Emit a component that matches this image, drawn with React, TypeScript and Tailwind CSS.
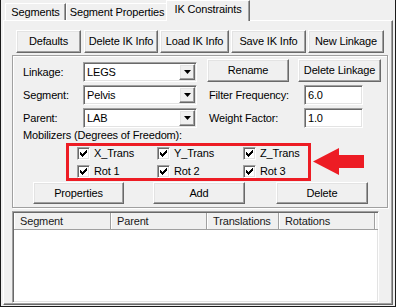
import React from 'react';

const raised =
  'border border-t-white border-l-white border-r-[#696969] border-b-[#696969] shadow-[inset_-1px_-1px_#a0a0a0,inset_1px_1px_#e3e3e3]';
const sunken =
  'border border-t-[#a0a0a0] border-l-[#a0a0a0] border-r-white border-b-white shadow-[inset_1px_1px_#696969,inset_-1px_-1px_#e3e3e3]';

function Btn({ label, className = '' }: { label: string; className?: string }) {
  return (
    <div className={`${raised} bg-[#f0f0f0] flex items-center justify-center shrink-0 ${className}`}>
      {label}
    </div>
  );
}

function Combo({ value }: { value: string }) {
  return (
    <div className={`${sunken} w-[114px] h-[20px] bg-white flex items-center pl-[3px] pr-[1px] shrink-0`}>
      <span className="flex-1">{value}</span>
      <div className={`${raised} w-[16px] h-[16px] bg-[#f0f0f0] flex items-center justify-center`}>
        <svg width="7" height="4" viewBox="0 0 7 4">
          <path d="M0 0h7L3.5 4z" fill="#000" />
        </svg>
      </div>
    </div>
  );
}

const CHECK = [2, 3, 4, 3, 2, 1, 0];

function Check({ label, className = '' }: { label: string; className?: string }) {
  return (
    <div className={`flex items-center h-[13px] ${className}`}>
      <div className={`${sunken} w-[13px] h-[13px] bg-white flex items-center justify-center shrink-0`}>
        <svg width="7" height="7" viewBox="0 0 7 7" shapeRendering="crispEdges">
          {CHECK.map((y, x) => (
            <rect key={x} x={x} y={y} width="1" height="3" fill="#000" />
          ))}
        </svg>
      </div>
      <span className="ml-[4px]">{label}</span>
    </div>
  );
}

function Tab({ label, className = '' }: { label: string; className?: string }) {
  return (
    <div
      className={`border-t border-l border-r border-t-white border-l-white border-r-[#696969] shadow-[inset_-1px_0_#a0a0a0] bg-[#f0f0f0] flex items-center justify-center shrink-0 ${className}`}
    >
      {label}
    </div>
  );
}

const COLS = [
  { name: 'Segment', w: 'w-[97px]' },
  { name: 'Parent', w: 'w-[96px]' },
  { name: 'Translations', w: 'w-[72px]' },
  { name: 'Rotations', w: 'w-[96px]' },
];

export default function App() {
  return (
    <div className="w-[396px] h-[307px] bg-[#f0f0f0] border-l border-r border-b border-[#1a1a1a] flex flex-col font-['Liberation_Sans',Arial,sans-serif] text-[11px] tracking-[-0.15px] text-black leading-[13px] overflow-hidden">
      {/* tabs */}
      <div className="flex items-end h-[20px] pl-[4px] shrink-0">
        <Tab label="Segments" className="w-[61px] h-[17px]" />
        <Tab label="Segment Properties" className="w-[102px] h-[17px]" />
        <Tab label="IK Constraints" className="relative z-10 w-[84px] h-[21px] -ml-[2px] -mb-px pb-[3px]" />
      </div>

      <div className="mx-[2px] mb-[1px] flex-1 border border-t-white border-l-white border-r-[#696969] border-b-[#696969] shadow-[inset_-1px_-1px_#a0a0a0] flex flex-col">
        {/* top buttons */}
        <div className="flex mt-[9px] ml-[12px] h-[23px]">
          <Btn label="Defaults" className="w-[65px] h-[23px]" />
          <Btn label="Delete IK Info" className="w-[74px] h-[23px] ml-[3px]" />
          <Btn label="Load IK Info" className="w-[69px] h-[23px] ml-[2px]" />
          <Btn label="Save IK Info" className="w-[75px] h-[23px] ml-[2px]" />
          <Btn label="New Linkage" className="w-[76px] h-[23px] ml-[2px]" />
        </div>

        {/* group box */}
        <div className="relative mt-[2px] ml-[8px] w-[376px] h-[153px] shrink-0 border border-[#a0a0a0] shadow-[inset_1px_1px_white,1px_1px_white] pt-[3px] flex flex-col">
          <div className="flex items-start h-[23px]">
            <div className="flex items-center mt-[3px] h-[20px]">
              <span className="w-[60px] pl-[10px] box-content">Linkage:</span>
              <Combo value="LEGS" />
            </div>
            <Btn label="Rename" className="w-[82px] h-[23px] ml-[10px]" />
            <Btn label="Delete Linkage" className="w-[83px] h-[23px] ml-[9px]" />
          </div>

          <div className="flex items-center h-[20px] mt-[3px]">
            <span className="w-[60px] pl-[10px] box-content">Segment:</span>
            <Combo value="Pelvis" />
            <span className="ml-[12px] w-[95px]">Filter Frequency:</span>
            <div className={`${sunken} w-[59px] h-[20px] bg-white flex items-center pl-[3px]`}>6.0</div>
          </div>

          <div className="flex items-center h-[20px] mt-[3px]">
            <span className="w-[60px] pl-[10px] box-content">Parent:</span>
            <Combo value="LAB" />
            <span className="ml-[12px] w-[95px]">Weight Factor:</span>
            <div className={`${sunken} w-[59px] h-[20px] bg-white flex items-center pl-[3px]`}>1.0</div>
          </div>

          <div className="pl-[10px] h-[13px] mt-[1px]">Mobilizers (Degrees of Freedom):</div>

          <div className="grid grid-cols-[80px_86px_80px] gap-y-[5px] pl-[64px] mt-[5px]">
            <Check label="X_Trans" />
            <Check label="Y_Trans" />
            <Check label="Z_Trans" />
            <Check label="Rot 1" />
            <Check label="Rot 2" />
            <Check label="Rot 3" />
          </div>

          <div className="flex mt-[4px]">
            <Btn label="Properties" className="w-[91px] h-[22px] ml-[20px]" />
            <Btn label="Add" className="w-[92px] h-[22px] ml-[29px]" />
            <Btn label="Delete" className="w-[92px] h-[22px] ml-[31px]" />
          </div>

          {/* annotation */}
          <div className="absolute left-[53px] top-[87px] w-[245px] h-[38px] border-[3px] border-[#ed1c24]" />
          <svg className="absolute left-[300px] top-[92px]" width="52" height="28" viewBox="0 0 52 28">
            <polygon points="0,13.5 26,0 26,7 51,7 51,20 26,20 26,27" fill="#ed1c24" />
          </svg>
        </div>

        {/* list view */}
        <div className={`${sunken} mt-[3px] ml-[8px] w-[367px] h-[92px] bg-white flex flex-col`}>
          <div className="flex h-[17px] ml-[1px] mt-[1px] bg-[#f0f0f0] text-[#1a1a1a]">
            {COLS.map((c) => (
              <div
                key={c.name}
                className={`${c.w} h-[17px] pl-[6px] flex items-center shrink-0 border-r border-b border-r-[#a0a0a0] border-b-[#a0a0a0] shadow-[inset_1px_0_white]`}
              >
                {c.name}
              </div>
            ))}
            <div className="flex-1 h-[17px] border-b border-b-[#a0a0a0] shadow-[inset_1px_0_white]" />
          </div>
        </div>
      </div>
    </div>
  );
}
